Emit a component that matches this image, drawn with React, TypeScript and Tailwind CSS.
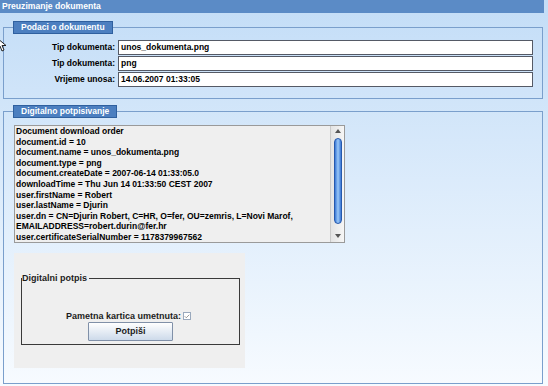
import { Check } from "lucide-react";

const docRows = [
  ["Tip dokumenta:", "unos_dokumenta.png"],
  ["Tip dokumenta:", "png"],
  ["Vrijeme unosa:", "14.06.2007 01:33:05"],
];

const orderLines = [
  "Document download order",
  "document.id = 10",
  "document.name = unos_dokumenta.png",
  "document.type = png",
  "document.createDate = 2007-06-14 01:33:05.0",
  "downloadTime = Thu Jun 14 01:33:50 CEST 2007",
  "user.firstName = Robert",
  "user.lastName = Djurin",
  "user.dn = CN=Djurin Robert, C=HR, O=fer, OU=zemris, L=Novi Marof,",
  "EMAILADDRESS=robert.durin@fer.hr",
  "user.certificateSerialNumber = 1178379967562",
];

function Scrollbar() {
  return (
    <div className="flex w-[14px] flex-col items-center border-l border-[#c9c9c9] bg-gradient-to-r from-[#e4e4e4] to-[#f6f6f6]">
      <div className="mt-[3px] h-0 w-0 border-x-[3px] border-b-[4px] border-x-transparent border-b-[#555]" />
      <div className="mt-[5px] h-[86px] w-[8px] rounded-full border border-[#2659ad] bg-gradient-to-r from-[#3b78d6] via-[#9cc9f7] to-[#3a76d4]" />
      <div className="mt-[10px] h-0 w-0 border-x-[3px] border-t-[4px] border-x-transparent border-t-[#555]" />
    </div>
  );
}

export default function App() {
  return (
    <div className="relative h-[386px] w-[548px] overflow-hidden bg-gradient-to-b from-[#c3ddf7] to-[#f7fbff] font-['Liberation_Sans',Arial,sans-serif] text-[8.5px] font-bold text-black">
      <div className="h-[13px] w-[544px] bg-[#5b8bc6] pl-[2px] text-[8.6px] leading-[13px] text-white">
        Preuzimanje dokumenta
      </div>

      <fieldset className="mt-[8px] ml-[3px] w-[540px] border border-[#7a9fcc] px-[9px] pt-[6px] pb-[11px]">
        <legend className="h-[13px] border border-[#2f609f] bg-[#4c7fc0] px-[7px] leading-[11px] text-white">
          Podaci o dokumentu
        </legend>
        <div className="flex flex-col gap-[1px]">
          {docRows.map(([label, value], i) => (
            <div key={i} className="flex items-center">
              <div className="w-[102px] text-right">{label}</div>
              <div className="ml-[3px] h-[15px] w-[415px] border border-[#555a66] bg-white pl-[2px] leading-[13px]">
                {value}
              </div>
            </div>
          ))}
        </div>
      </fieldset>

      <fieldset className="mt-[6px] ml-[3px] w-[540px] border border-[#7a9fcc] px-[9px] pt-[7px] pb-[15px]">
        <legend className="h-[13px] border border-[#2f609f] bg-[#4c7fc0] px-[7px] leading-[11px] text-white">
          Digitalno potpisivanje
        </legend>

        <div className="ml-[1px] flex h-[118px] w-[331px] border border-[#9a9a9a] bg-[#efefef]">
          <div className="flex-1 overflow-hidden pl-[1px] leading-[10.6px]">
            {orderLines.map((line, i) => (
              <div key={i} className="whitespace-nowrap">
                {line}
              </div>
            ))}
          </div>
          <Scrollbar />
        </div>

        <div className="mt-[10px] ml-[1px] h-[115px] w-[231px] bg-[#efefef] pt-[20px] pl-[7px]">
          <fieldset className="w-[219px] border border-[#3a3a3a] pt-[28px] pb-[3px] text-[9px] text-[#1c1c1c]">
            <legend className="pr-[2px] leading-[10px]">Digitalni potpis</legend>
            <div className="flex flex-col items-center">
              <div className="flex items-center pr-[4px] leading-[10px]">
                <span>Pametna kartica umetnuta:</span>
                <span className="ml-[2px] flex h-[8px] w-[8px] items-center justify-center border border-[#9aa9bd] bg-white">
                  <Check className="h-[7px] w-[7px] text-[#7a7a7a]" strokeWidth={3} />
                </span>
              </div>
              <button className="mt-[1px] h-[19px] w-[85px] rounded-[1px] border border-[#8090a8] bg-gradient-to-b from-white to-[#cddaea] font-bold text-[#1c1c1c]">
                Potpiši
              </button>
            </div>
          </fieldset>
        </div>
      </fieldset>

      <svg className="absolute top-[37px] left-[-4px]" width="11" height="15" viewBox="0 0 11 15">
        <path d="M1 1 L1 12 L4 9 L6 14 L8 13 L6 8.5 L10 8.5 Z" fill="white" stroke="#222" strokeWidth="1" />
      </svg>
    </div>
  );
}
